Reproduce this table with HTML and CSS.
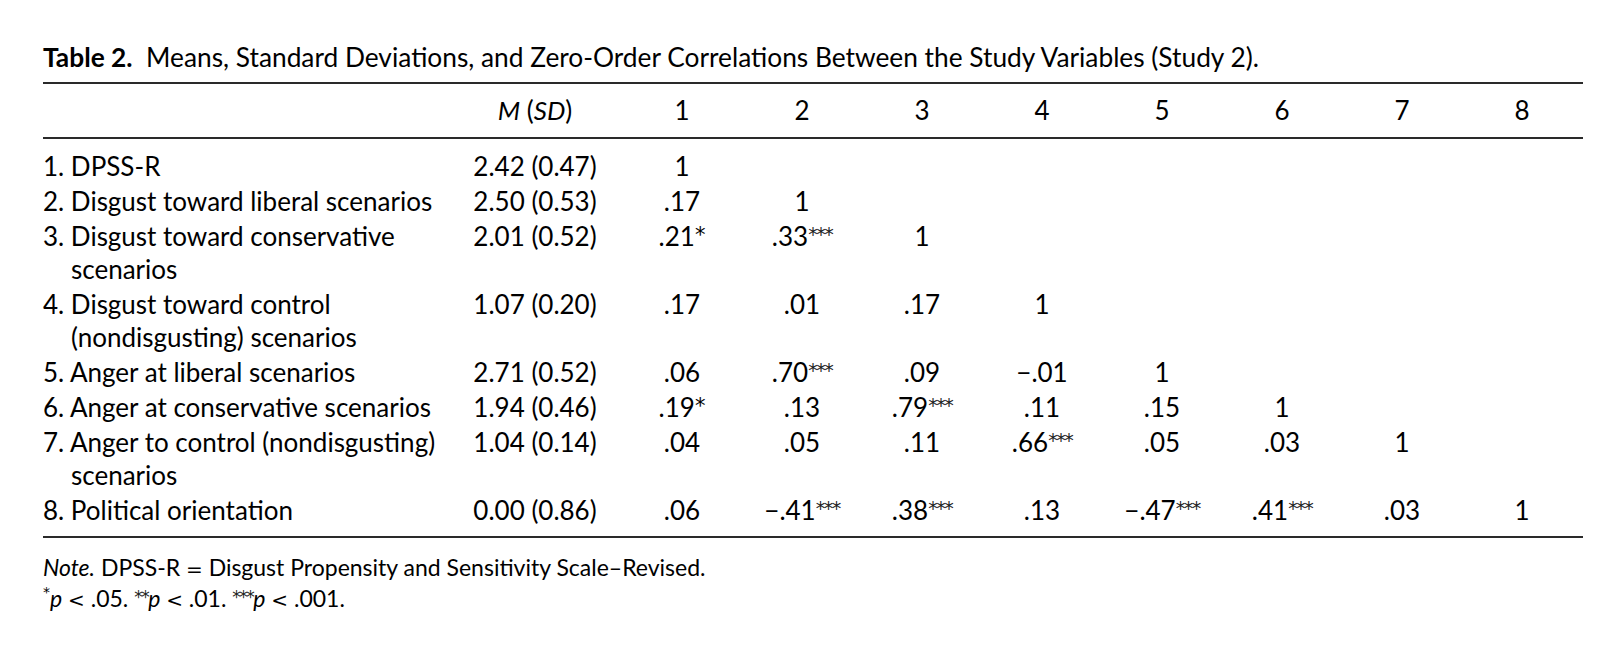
FILE: index.html
```html
<!DOCTYPE html>
<html lang="en">
<head>
<meta charset="utf-8">
<title>Table 2</title>
<link rel="stylesheet" href="styles.css">
</head>
<body>
<div class="page">
  <div class="caption"><b>Table 2.</b>&nbsp; Means, Standard Deviations, and Zero-Order Correlations Between the Study Variables (Study 2).</div>
  <div class="tbl">
    <div class="row head">
      <div class="lbl"></div>
      <div class="c"><i>M</i> (<i>SD</i>)</div>
      <div class="c">1</div><div class="c">2</div><div class="c">3</div><div class="c">4</div>
      <div class="c">5</div><div class="c">6</div><div class="c">7</div><div class="c">8</div>
    </div>
    <div class="body">
      <div class="row">
        <div class="lbl">1. DPSS-R</div><div class="c">2.42 (0.47)</div>
        <div class="c">1</div><div class="c"></div><div class="c"></div><div class="c"></div><div class="c"></div><div class="c"></div><div class="c"></div><div class="c"></div>
      </div>
      <div class="row">
        <div class="lbl">2. Disgust toward liberal scenarios</div><div class="c">2.50 (0.53)</div>
        <div class="c">.17</div><div class="c">1</div><div class="c"></div><div class="c"></div><div class="c"></div><div class="c"></div><div class="c"></div><div class="c"></div>
      </div>
      <div class="row">
        <div class="lbl">3. Disgust toward conservative<br>scenarios</div><div class="c">2.01 (0.52)</div>
        <div class="c">.21<span class="s1">*</span></div><div class="c">.33<span class="s3">***</span></div><div class="c">1</div><div class="c"></div><div class="c"></div><div class="c"></div><div class="c"></div><div class="c"></div>
      </div>
      <div class="row">
        <div class="lbl">4. Disgust toward control<br>(nondisgusting) scenarios</div><div class="c">1.07 (0.20)</div>
        <div class="c">.17</div><div class="c">.01</div><div class="c">.17</div><div class="c">1</div><div class="c"></div><div class="c"></div><div class="c"></div><div class="c"></div>
      </div>
      <div class="row">
        <div class="lbl">5. Anger at liberal scenarios</div><div class="c">2.71 (0.52)</div>
        <div class="c">.06</div><div class="c">.70<span class="s3">***</span></div><div class="c">.09</div><div class="c">−.01</div><div class="c">1</div><div class="c"></div><div class="c"></div><div class="c"></div>
      </div>
      <div class="row">
        <div class="lbl">6. Anger at conservative scenarios</div><div class="c">1.94 (0.46)</div>
        <div class="c">.19<span class="s1">*</span></div><div class="c">.13</div><div class="c">.79<span class="s3">***</span></div><div class="c">.11</div><div class="c">.15</div><div class="c">1</div><div class="c"></div><div class="c"></div>
      </div>
      <div class="row">
        <div class="lbl">7. Anger to control (nondisgusting)<br>scenarios</div><div class="c">1.04 (0.14)</div>
        <div class="c">.04</div><div class="c">.05</div><div class="c">.11</div><div class="c">.66<span class="s3">***</span></div><div class="c">.05</div><div class="c">.03</div><div class="c">1</div><div class="c"></div>
      </div>
      <div class="row">
        <div class="lbl">8. Political orientation</div><div class="c">0.00 (0.86)</div>
        <div class="c">.06</div><div class="c">−.41<span class="s3">***</span></div><div class="c">.38<span class="s3">***</span></div><div class="c">.13</div><div class="c">−.47<span class="s3">***</span></div><div class="c">.41<span class="s3">***</span></div><div class="c">.03</div><div class="c">1</div>
      </div>
    </div>
  </div>
  <div class="notes">
    <p><i>Note.</i> DPSS-R <span class="op">=</span> Disgust Propensity and Sensitivity Scale–Revised.</p>
    <p><sup class="hi">*</sup><i>p</i> <span class="op">&lt;</span> .05. <span class="s2">**</span><i>p</i> <span class="op">&lt;</span> .01. <span class="s2">***</span><i>p</i> <span class="op">&lt;</span> .001.</p>
  </div>
</div>
</body>
</html>
```
FILE: styles.css
```css
html, body {
  margin: 0;
  padding: 0;
  background: #fff;
}
body {
  font-family: Lato, "Open Sans", "DejaVu Sans", sans-serif;
  color: #000;
}
.page {
  padding: 42px 0 0 43px;
  width: 1540px;
}
.caption {
  font-size: 26.3px;
  line-height: 30px;
  margin-bottom: 10px;
  white-space: nowrap;
}
.caption b {
  font-weight: 700;
}
.tbl {
  width: 1540px;
  border-top: 2px solid #2a2a2a;
  border-bottom: 2px solid #2a2a2a;
}
.row {
  display: grid;
  grid-template-columns: 405px 174px repeat(8, 120px);
  font-size: 26px;
  line-height: 33px;
  padding: 1px 0;
}
.head {
  padding: 10px 0;
  border-bottom: 2px solid #2a2a2a;
}
.body {
  padding: 10px 0 8px;
}
.lbl {
  padding-left: 28px;
  text-indent: -28px;
  white-space: nowrap;
}
.c {
  text-align: center;
  white-space: nowrap;
}
.s1 {
  font-family: "DejaVu Sans", sans-serif;
  font-size: 21px;
  line-height: 0;
  vertical-align: 4px;
}
.s3 {
  font-family: "DejaVu Sans", sans-serif;
  font-size: 19px;
  line-height: 0;
  vertical-align: 5px;
  letter-spacing: -1.5px;
  color: #222;
}
.notes {
  padding-top: 15px;
  font-size: 23px;
  line-height: 29px;
}
.notes p {
  margin: 0;
}
.op {
  font-family: "DejaVu Sans", sans-serif;
  font-size: 20px;
}
.hi {
  font-family: "DejaVu Sans", sans-serif;
  font-size: 14px;
  line-height: 0;
  vertical-align: 10px;
}
.s2 {
  font-family: "DejaVu Sans", sans-serif;
  font-size: 17px;
  line-height: 0;
  vertical-align: 4px;
  letter-spacing: -1.5px;
  color: #222;
}
```
